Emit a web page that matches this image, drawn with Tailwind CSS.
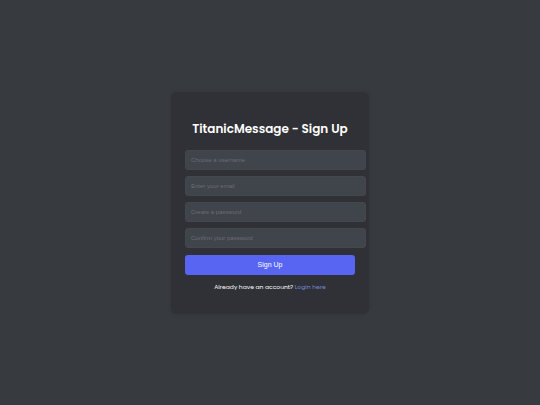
<!DOCTYPE html>
<html lang="en">
<head>
    <meta charset="UTF-8">
    <meta name="viewport" content="width=device-width, initial-scale=1.0">
    <title>TitanicMessage - Sign Up</title>
    <script src="https://cdn.jsdelivr.net/npm/@tailwindcss/browser@4"></script>
</head>
<body class="min-h-screen flex items-center justify-center bg-[#373a3f] text-white font-['Poppins',Roboto,sans-serif]">
    <main class="w-full max-w-[198px] rounded-md bg-[#303136] px-[14px] pt-7 pb-[22px] shadow-[0_0_4px_rgba(0,0,0,0.1)]">
        <h1 class="mb-3 text-center text-[12px] leading-[18px] font-semibold whitespace-nowrap">TitanicMessage - Sign Up</h1>

        <!-- Sign up form -->
        <form>
            <!-- Fields run wider than the button -->
            <div class="-mr-[11px] flex flex-col gap-[6px]">
                <input type="text" name="username" aria-label="Username" placeholder="Choose a username" required
                    class="h-5 w-full rounded-[3px] border border-[#44474c] bg-[#40444b] px-[5px] font-['Liberation_Sans',sans-serif] text-[6px] placeholder:text-[#6c6e72] focus:outline-none focus:border-[#5865f2]">
                <input type="email" name="email" aria-label="Email" placeholder="Enter your email" required
                    class="h-5 w-full rounded-[3px] border border-[#44474c] bg-[#40444b] px-[5px] font-['Liberation_Sans',sans-serif] text-[6px] placeholder:text-[#6c6e72] focus:outline-none focus:border-[#5865f2]">
                <input type="password" name="password" aria-label="Password" placeholder="Create a password" required
                    class="h-5 w-full rounded-[3px] border border-[#44474c] bg-[#40444b] px-[5px] font-['Liberation_Sans',sans-serif] text-[6px] placeholder:text-[#6c6e72] focus:outline-none focus:border-[#5865f2]">
                <input type="password" name="confirm" aria-label="Confirm password" placeholder="Confirm your password" required
                    class="h-5 w-full rounded-[3px] border border-[#44474c] bg-[#40444b] px-[5px] font-['Liberation_Sans',sans-serif] text-[6px] placeholder:text-[#6c6e72] focus:outline-none focus:border-[#5865f2]">
            </div>
            <button type="submit" class="mt-[7px] block h-5 w-full rounded-[3px] bg-[#5865f2] font-['Liberation_Sans',sans-serif] text-[7px] leading-5 hover:bg-[#4752c4]">Sign Up</button>
        </form>

        <p class="mt-[7px] text-center text-[6px] leading-[10px] whitespace-nowrap">Already have an account? <a href="#" class="text-[#7289da] hover:underline">Login here</a></p>
    </main>
</body>
</html>
